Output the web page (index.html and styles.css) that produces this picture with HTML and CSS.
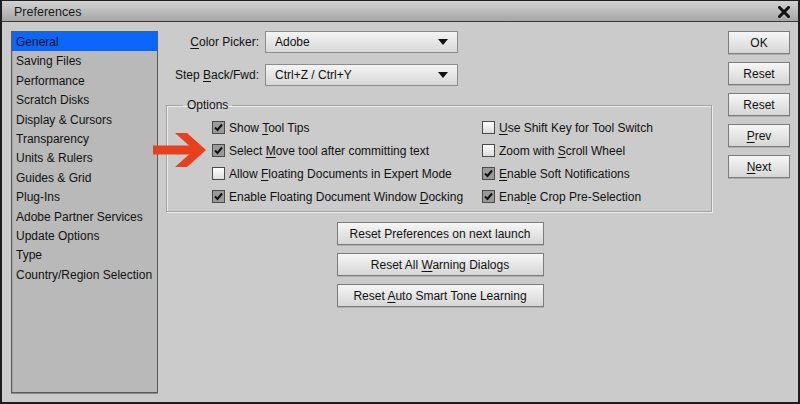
FILE: index.html
```html
<!DOCTYPE html>
<html>
<head>
  <meta charset="UTF-8">
  <title>Preferences</title>
  <link rel="stylesheet" href="styles.css">
</head>
<body>
  <div class="window">
    <!-- Title Bar -->
    <div class="titlebar">
      <span class="title">Preferences</span>
      <svg class="close" width="12" height="12" viewBox="0 0 12 12">
        <path d="M1.5 1.5 L10.5 10.5 M10.5 1.5 L1.5 10.5" stroke="#111" stroke-width="3" stroke-linecap="square"/>
      </svg>
    </div>
    <div class="content">
      <!-- Category List -->
      <ul class="categories">
        <li class="selected">General</li>
        <li>Saving Files</li>
        <li>Performance</li>
        <li>Scratch Disks</li>
        <li>Display &amp; Cursors</li>
        <li>Transparency</li>
        <li>Units &amp; Rulers</li>
        <li>Guides &amp; Grid</li>
        <li>Plug-Ins</li>
        <li>Adobe Partner Services</li>
        <li>Update Options</li>
        <li>Type</li>
        <li>Country/Region Selection</li>
      </ul>
      <!-- General Panel -->
      <div class="main">
        <div class="field-row">
          <label><u>C</u>olor Picker:</label>
          <div class="select">
            <span>Adobe</span>
            <svg width="10" height="6" viewBox="0 0 10 6"><path d="M0 0 H10 L5 6 Z" fill="#111"/></svg>
          </div>
        </div>
        <div class="field-row">
          <label>Step <u>B</u>ack/Fwd:</label>
          <div class="select">
            <span>Ctrl+Z / Ctrl+Y</span>
            <svg width="10" height="6" viewBox="0 0 10 6"><path d="M0 0 H10 L5 6 Z" fill="#111"/></svg>
          </div>
        </div>
        <fieldset class="options">
          <legend>Options</legend>
          <div class="checks">
            <div class="check on"><span class="box"></span><span>Show <u>T</u>ool Tips</span></div>
            <div class="check"><span class="box"></span><span><u>U</u>se Shift Key for Tool Switch</span></div>
            <div class="check on"><span class="box"></span><span>Select <u>M</u>ove tool after committing text</span></div>
            <div class="check"><span class="box"></span><span>Zoom with <u>S</u>croll Wheel</span></div>
            <div class="check"><span class="box"></span><span>Allow <u>F</u>loating Documents in Expert Mode</span></div>
            <div class="check on"><span class="box"></span><span><u>E</u>nable Soft Notifications</span></div>
            <div class="check on"><span class="box"></span><span>Enable Floating Document Window <u>D</u>ocking</span></div>
            <div class="check on"><span class="box"></span><span>Enab<u>l</u>e Crop Pre-Selection</span></div>
          </div>
        </fieldset>
        <div class="reset-buttons">
          <button>Reset Preferences on next launch</button>
          <button>Reset All <u>W</u>arning Dialogs</button>
          <button>Reset <u>A</u>uto Smart Tone Learning</button>
        </div>
        <!-- Red annotation arrow -->
        <svg class="arrow" width="53" height="34" viewBox="0 0 53 34">
          <polygon points="0,12.5 36,12.5 22,0 34,0 53,17 34,34 22,34 36,21.5 0,21.5" fill="#e8401c"/>
        </svg>
      </div>
      <!-- Dialog Buttons -->
      <div class="actions">
        <button>OK</button>
        <button>Reset</button>
        <button>Reset</button>
        <button><u>P</u>rev</button>
        <button><u>N</u>ext</button>
      </div>
    </div>
  </div>
</body>
</html>
```

FILE: styles.css
```css
/* Global Styles */
body {
  margin: 0;
  font-family: 'Liberation Sans', Arial, sans-serif;
  font-size: 12px;
  color: #111;
}
u {
  text-decoration-thickness: 1px;
  text-underline-offset: 2px;
}
/* Dialog Window */
.window {
  width: 800px;
  height: 404px;
  box-sizing: border-box;
  border: 2px solid #1e1e1e;
  border-top-width: 1px;
  background: #cbcbcb;
  display: flex;
  flex-direction: column;
}
.titlebar {
  height: 21px;
  flex: none;
  display: flex;
  align-items: center;
  justify-content: space-between;
  padding: 1px 8px 0 12px;
  box-sizing: border-box;
  background: linear-gradient(#d2d2d2, #a6a6a6);
  border-bottom: 1px solid #3a3a3a;
}
.title {
  font-size: 12.5px;
  color: #1a1a1a;
}
.close {
  display: block;
}
/* Content Area */
.content {
  flex: 1;
  display: flex;
  padding: 9px 8px 9px 9px;
}
/* Category List */
.categories {
  list-style: none;
  margin: 0;
  padding: 0;
  width: 147px;
  box-sizing: border-box;
  background: #b9b9b9;
  border: 1px solid #5a5a5a;
  box-shadow: inset 1px 1px 0 #a6a6a6, 0 1px 0 #8a8a8a;
}
.categories li {
  height: 19.4px;
  line-height: 21px;
  padding-left: 4px;
  white-space: nowrap;
}
.categories li.selected {
  background: #0a66ff;
}
/* Main Panel */
.main {
  position: relative;
  width: 546px;
  margin-left: 8px;
  display: flex;
  flex-direction: column;
}
.field-row {
  display: flex;
  align-items: center;
  gap: 6px;
  height: 22px;
  margin-bottom: 11px;
}
.field-row label {
  width: 93px;
  text-align: right;
}
.select {
  width: 193px;
  height: 22px;
  box-sizing: border-box;
  border: 1px solid #8c8c8c;
  background: linear-gradient(#f4f4f4, #d8d8d8);
  display: flex;
  align-items: center;
  justify-content: space-between;
  padding: 0 9px 0 9px;
}
.select svg {
  display: block;
}
/* Options Group */
.options {
  margin: 1px 0 0;
  padding: 0 0 3px 16px;
  border: 1px solid #a2a2a2;
  box-shadow: 1px 1px 0 #ececec, inset 1px 1px 0 #ececec;
}
.options legend {
  padding: 0 4px;
  line-height: 14px;
}
.checks {
  display: grid;
  grid-template-columns: 270px auto;
  grid-auto-rows: 23px;
  margin: 4px 0 0 29px;
}
.check {
  display: flex;
  align-items: center;
  gap: 4px;
  white-space: nowrap;
}
.check .box {
  width: 13px;
  height: 13px;
  box-sizing: border-box;
  border: 1px solid #4a4a4a;
  background: linear-gradient(#ffffff, #dcdcdc);
}
.check.on .box {
  background: #9a9a9a url("data:image/svg+xml,%3Csvg xmlns='http://www.w3.org/2000/svg' width='11' height='11' viewBox='0 0 11 11'%3E%3Cpath d='M2 5.5 L4.5 8 L9 2.5' fill='none' stroke='%23111' stroke-width='2'/%3E%3C/svg%3E") center no-repeat;
}
/* Buttons */
button {
  font-family: inherit;
  font-size: 12px;
  color: #111;
  height: 23px;
  padding: 0;
  border: 1px solid #7c7c7c;
  background: linear-gradient(#f6f6f6, #d6d6d6);
  box-shadow: 0 1px 0 #b0b0b0;
}
.reset-buttons {
  display: flex;
  flex-direction: column;
  align-items: center;
  gap: 8px;
  margin-top: 10px;
  padding-left: 2px;
}
.reset-buttons button {
  width: 207px;
}
.actions {
  display: flex;
  flex-direction: column;
  gap: 8px;
  margin-left: 16px;
}
.actions button {
  width: 62px;
}
/* Annotation arrow overlaying the options box */
.arrow {
  position: absolute;
  left: -13px;
  top: 102px;
}
```
